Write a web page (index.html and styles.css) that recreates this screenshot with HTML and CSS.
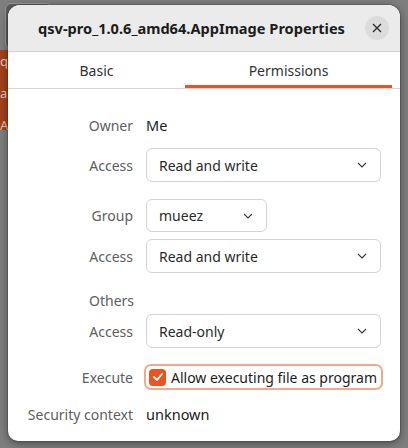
FILE: index.html
```html
<!DOCTYPE html>
<html>
<head>
<meta charset="utf-8">
<link rel="stylesheet" href="styles.css">
</head>
<body>
<div class="desk-window"></div>
<div class="desk-strip"><span>q</span><span>a</span><span>Ap</span></div>
<div class="dialog">
  <div class="header">
    <div class="title">qsv-pro_1.0.6_amd64.AppImage Properties</div>
    <div class="close"><svg width="10" height="10" viewBox="0 0 10 10"><path d="M1 1 L9 9 M9 1 L1 9" stroke="#2e2e2e" stroke-width="1.4" fill="none"/></svg></div>
  </div>
  <div class="tabs">
    <div class="tab tab-basic">Basic</div>
    <div class="tab tab-perm active">Permissions</div>
  </div>
  <div class="content">
    <div class="row r-owner"><div class="label">Owner</div><div class="value">Me</div></div>
    <div class="row r-a1"><div class="label">Access</div><div class="select wide"><span>Read and write</span><svg class="chev" width="10" height="6" viewBox="0 0 10 6"><path d="M1 1 L5 5 L9 1" stroke="#3a3a3a" stroke-width="1.1" fill="none"/></svg></div></div>
    <div class="row r-group"><div class="label">Group</div><div class="select narrow"><span>mueez</span><svg class="chev" width="10" height="6" viewBox="0 0 10 6"><path d="M1 1 L5 5 L9 1" stroke="#3a3a3a" stroke-width="1.1" fill="none"/></svg></div></div>
    <div class="row r-a2"><div class="label">Access</div><div class="select wide"><span>Read and write</span><svg class="chev" width="10" height="6" viewBox="0 0 10 6"><path d="M1 1 L5 5 L9 1" stroke="#3a3a3a" stroke-width="1.1" fill="none"/></svg></div></div>
    <div class="row r-others"><div class="label others">Others</div><div></div></div>
    <div class="row r-a3"><div class="label">Access</div><div class="select wide"><span>Read-only</span><svg class="chev" width="10" height="6" viewBox="0 0 10 6"><path d="M1 1 L5 5 L9 1" stroke="#3a3a3a" stroke-width="1.1" fill="none"/></svg></div></div>
    <div class="row r-exec"><div class="label">Execute</div><div class="check"><span class="box"><svg width="12" height="10" viewBox="0 0 12 10"><path d="M2 5 L5 8 L10 2" stroke="#fff" stroke-width="1.8" fill="none" stroke-linecap="round" stroke-linejoin="round"/></svg></span><span class="check-text">Allow executing file as program</span></div></div>
    <div class="row r-sec"><div class="label">Security context</div><div class="value">unknown</div></div>
  </div>
</div>
</body>
</html>
```

FILE: styles.css
```css
html, body {
  margin: 0;
  padding: 0;
}
body {
  background: #7e7e7e;
  width: 408px;
  height: 448px;
  overflow: hidden;
  position: relative;
  font-family: "Noto Sans", "DejaVu Sans", sans-serif;
  padding: 5px 8px 0 8px;
  box-sizing: border-box;
}
.desk-window {
  position: absolute;
  left: 5px;
  top: 3px;
  width: 45px;
  height: 44px;
  background: #5f5f5f;
  border: 1px solid #9a9a9a;
  border-radius: 6px;
}
.desk-strip {
  position: absolute;
  left: 0;
  top: 50px;
  width: 10px;
  height: 80px;
  background: #a3411b;
  color: #e8c8b8;
  font-size: 13px;
  display: flex;
  flex-direction: column;
  gap: 14px;
  padding-top: 2px;
  box-sizing: border-box;
}
.dialog {
  position: relative;
  width: 392px;
  background: #ffffff;
  border-radius: 12px 12px 10px 10px;
  box-shadow: 0 2px 8px rgba(0,0,0,0.45), 0 0 0 1px rgba(0,0,0,0.12);
  overflow: hidden;
  padding-bottom: 17px;
}
.header {
  height: 47px;
  background: #ebebeb;
  border-bottom: 1px solid #d2d2d2;
  display: flex;
  align-items: center;
  box-sizing: border-box;
}
.title {
  flex: 1;
  text-align: center;
  padding-left: 10px;
  font-weight: bold;
  font-size: 14.6px;
  color: #1c1c1c;
}
.close {
  width: 24px;
  height: 24px;
  border-radius: 50%;
  background: #dcdcdc;
  margin-right: 11px;
  display: flex;
  align-items: center;
  justify-content: center;
}
.tabs {
  height: 37px;
  display: flex;
  border-bottom: 1px solid #d6d6d6;
  box-sizing: border-box;
}
.tab {
  display: flex;
  align-items: center;
  justify-content: center;
  font-size: 14px;
  color: #333333;
  box-sizing: border-box;
}
.tab-basic {
  width: 177px;
}
.tab-perm {
  width: 207px;
}
.tab.active {
  border-bottom: 3px solid #e95420;
  padding-top: 3px;
}
.row {
  display: grid;
  grid-template-columns: 125px 235px;
  column-gap: 13px;
  align-items: center;
}
.label {
  text-align: right;
  color: #5e5e5e;
  font-size: 14px;
  white-space: nowrap;
}
.label.others {
  text-align: left;
  padding-left: 81px;
}
.value {
  color: #1c1c1c;
  font-size: 14.5px;
  height: 20px;
  line-height: 20px;
}
.r-owner { margin-top: 26px; height: 20px; }
.r-a1 { margin-top: 13px; }
.r-group { margin-top: 17px; }
.r-a2 { margin-top: 7px; }
.r-others { margin-top: 17px; height: 20px; }
.r-a3 { margin-top: 4px; }
.r-exec { margin-top: 16px; }
.r-sec { margin-top: 14px; height: 20px; }
.select {
  height: 34px;
  border: 1px solid #d3d3d3;
  border-radius: 6px;
  box-sizing: border-box;
  display: flex;
  align-items: center;
  justify-content: space-between;
  padding: 0 13px 0 12px;
  font-size: 14px;
  color: #2a2a2a;
}
.select.wide { width: 235px; }
.select.narrow { width: 121px; height: 33px; }
.check {
  width: 239px;
  margin-left: -2px;
  height: 26px;
  border: 2px solid #f4a98b;
  border-radius: 7px;
  box-sizing: border-box;
  display: flex;
  align-items: center;
  padding-left: 3px;
  gap: 5px;
}
.box {
  width: 17px;
  height: 17px;
  border-radius: 4px;
  background: #e95420;
  display: flex;
  align-items: center;
  justify-content: center;
}
.check-text {
  font-size: 14px;
  color: #1c1c1c;
  white-space: nowrap;
}
```
